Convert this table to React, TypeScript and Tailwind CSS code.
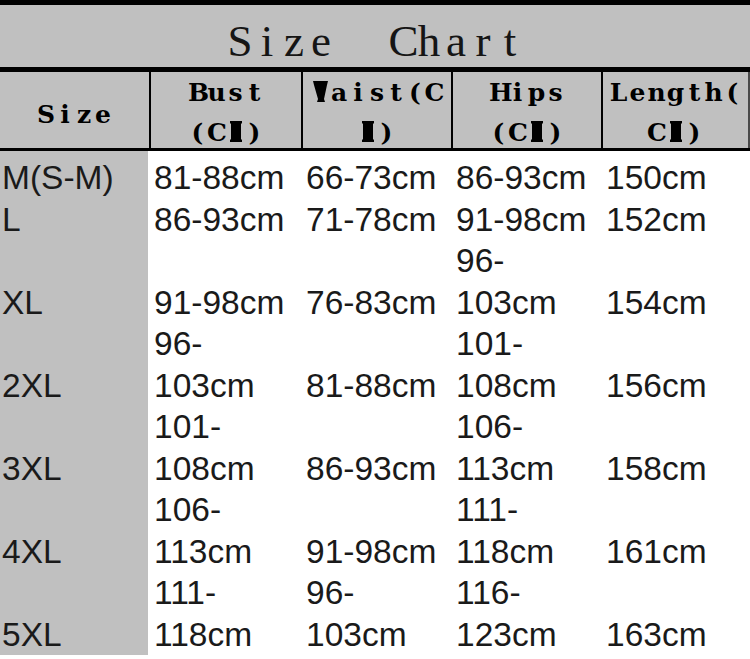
type Row = { size: string; lines: number; cols: string[][] };

const rows: Row[] = [
  { size: "M(S-M)", lines: 1, cols: [["81-88cm"], ["66-73cm"], ["86-93cm"], ["150cm"]] },
  { size: "L", lines: 1, cols: [["86-93cm"], ["71-78cm"], ["91-98cm"], ["152cm"]] },
  { size: "XL", lines: 2, cols: [["91-98cm"], ["76-83cm"], ["96-", "103cm"], ["154cm"]] },
  { size: "2XL", lines: 2, cols: [["96-", "103cm"], ["81-88cm"], ["101-", "108cm"], ["156cm"]] },
  { size: "3XL", lines: 2, cols: [["101-", "108cm"], ["86-93cm"], ["106-", "113cm"], ["158cm"]] },
  { size: "4XL", lines: 2, cols: [["106-", "113cm"], ["91-98cm"], ["111-", "118cm"], ["161cm"]] },
  { size: "5XL", lines: 2, cols: [["111-", "118cm"], ["96-", "103cm"], ["116-", "123cm"], ["163cm"]] },
];

const colWidths = ["w-[155px] pl-[6px]", "w-[150px] pl-[3px]", "w-[150px] pl-[3px]", "w-[147px] pl-[3px]"];

// half-width cells, like the CJK font the sheet was typed in
function Mono({ text, cell }: { text: string; cell: string }) {
  return (
    <>
      {text.split("").map((c, i) => (
        <span key={i} className={`inline-block text-center ${cell}`}>
          {c === " " ? "\u00a0" : c}
        </span>
      ))}
    </>
  );
}

// missing-glyph boxes from the original export
function Tofu() {
  return (
    <span className="inline-block w-[19px] text-center">
      <svg viewBox="0 0 12 21" className="inline-block h-[21px] w-[12px] align-[-1px]">
        <polygon points="0,0 12,0 12,2 11,3 11,18 12,19 12,21 0,21 0,19 1,18 1,3 0,2" fill="#000" />
      </svg>
    </span>
  );
}

function TofuW() {
  return (
    <span className="inline-block w-[19px] text-center">
      <svg viewBox="0 0 15 21" className="inline-block h-[21px] w-[15px] align-[-1px]">
        <polygon points="0,0 15,0 14,4 11,18 12,21 4,21 5,18 1,4" fill="#000" />
      </svg>
    </span>
  );
}

export default function App() {
  const head = "font-['DejaVu_Serif',serif] text-[25px] font-bold text-black";
  return (
    <div className="h-[659px] w-[750px] overflow-hidden bg-white">
      {/* title */}
      <div className="h-[72px] border-t-[5px] border-b-[5px] border-black bg-[#c0c0c0] pt-[10px] text-center">
        <div className="font-['Liberation_Serif',serif] text-[45px] leading-[52px] text-[#151515]">
          <Mono text="Size  Chart" cell="w-[27px]" />
        </div>
      </div>

      {/* column headers */}
      <div className={`flex h-[79px] border-b-[3px] border-black bg-[#c0c0c0] ${head}`}>
        <div className="flex w-[151px] items-center justify-center border-r-2 border-black pt-[10px] leading-[40px]">
          <Mono text="Size" cell="w-[19px]" />
        </div>
        <div className="w-[152px] border-r-2 border-black pt-[1px] text-center leading-[40px]">
          <div><Mono text="Bust" cell="w-[19px]" /></div>
          <div>
            <Mono text="(C" cell="w-[19px]" />
            <Tofu />
            <Mono text=")" cell="w-[19px]" />
          </div>
        </div>
        <div className="w-[150px] border-r-2 border-black pt-[1px] text-center leading-[40px]">
          <div>
            <TofuW />
            <Mono text="aist(C" cell="w-[19px]" />
          </div>
          <div>
            <Tofu />
            <Mono text=")" cell="w-[19px]" />
          </div>
        </div>
        <div className="w-[150px] border-r-2 border-black pt-[1px] text-center leading-[40px]">
          <div><Mono text="Hips" cell="w-[19px]" /></div>
          <div>
            <Mono text="(C" cell="w-[19px]" />
            <Tofu />
            <Mono text=")" cell="w-[19px]" />
          </div>
        </div>
        <div className="w-[147px] border-r-2 border-[#4a4a4a] pt-[1px] text-center leading-[40px]">
          <div><Mono text="Length(" cell="w-[19px]" /></div>
          <div>
            <Mono text="C" cell="w-[19px]" />
            <Tofu />
            <Mono text=")" cell="w-[19px]" />
          </div>
        </div>
      </div>

      {/* body */}
      <div className="font-['Liberation_Sans',Arial,sans-serif] text-[33.5px] leading-[41.5px] text-[#1a1a1a]">
        <div className="flex h-[6px]">
          <div className="w-[148px] bg-[#c0c0c0]" />
        </div>
        {rows.map((r) => (
          <div key={r.size} className={`flex ${r.lines === 2 ? "h-[83px]" : "h-[41.5px]"}`}>
            <div className="flex w-[148px] flex-col justify-end bg-[#c0c0c0] pl-[2px]">
              <div>{r.size}</div>
            </div>
            {r.cols.map((lines, i) => (
              <div key={i} className={`flex flex-col justify-end whitespace-nowrap ${colWidths[i]}`}>
                {lines.map((l) => (
                  <div key={l}>{l}</div>
                ))}
              </div>
            ))}
          </div>
        ))}
      </div>
    </div>
  );
}
